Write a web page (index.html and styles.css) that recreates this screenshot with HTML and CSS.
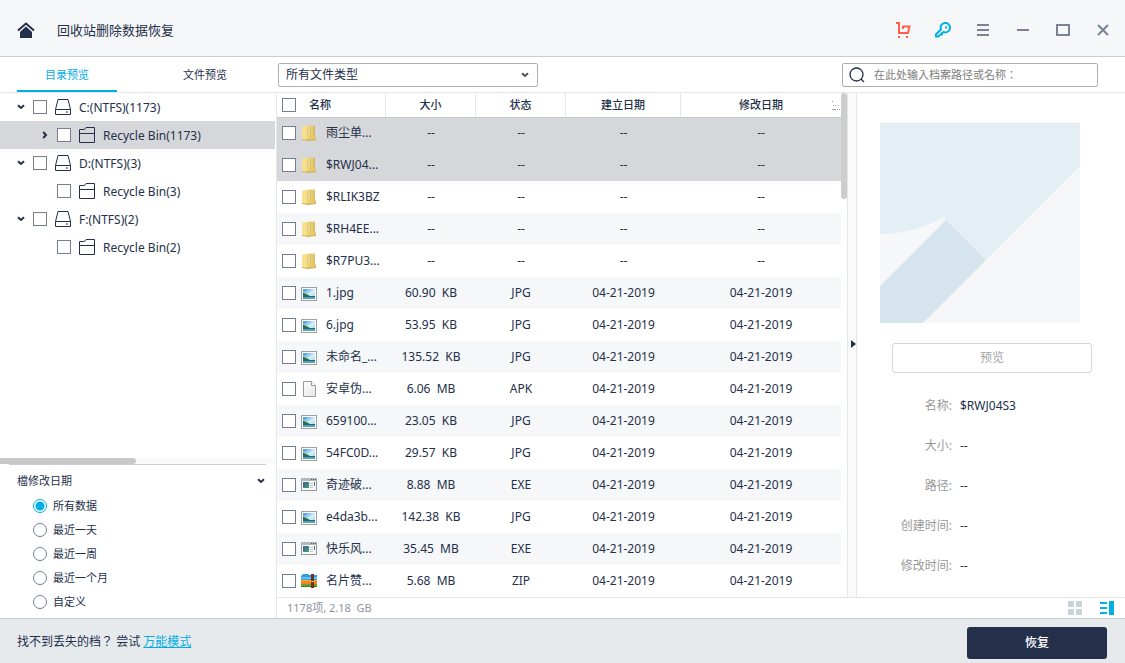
FILE: index.html
```html
<!DOCTYPE html>
<html lang="zh-CN">
<head>
<meta charset="utf-8">
<title>回收站删除数据恢复</title>
<link rel="stylesheet" href="styles.css">
</head>
<body>
<svg class="sprite" aria-hidden="true">
  <defs>
    <linearGradient id="gold" x1="0" x2="1"><stop offset="0" stop-color="#fbeea6"/><stop offset="1" stop-color="#e3bf5c"/></linearGradient>
    <linearGradient id="sky" x1="0" y1="0" x2="1" y2="1"><stop offset="0" stop-color="#3c93d6"/><stop offset="0.55" stop-color="#d8f0fa"/><stop offset="1" stop-color="#8cc7e6"/></linearGradient>
    <linearGradient id="paper" x1="0" y1="0" x2="1" y2="1"><stop offset="0" stop-color="#ffffff"/><stop offset="1" stop-color="#e4e4e4"/></linearGradient>
    <linearGradient id="pane" x1="0" y1="0" x2="1" y2="1"><stop offset="0" stop-color="#3c5fa6"/><stop offset="1" stop-color="#3fa66b"/></linearGradient>
  </defs>
  <symbol id="chevron" viewBox="0 0 8 6"><path d="M1 1.2 L4 4 L7 1.2" fill="none" stroke="currentColor" stroke-width="2"/></symbol>
  <symbol id="drive" viewBox="0 0 16 16"><path d="M0.5 10.5 L3 0.5 H13 L15.5 10.5 V15.5 H0.5 Z M0.5 10.5 H15.5 M11 13 H13" fill="none" stroke="currentColor"/></symbol>
  <symbol id="bin" viewBox="0 0 16 16"><path d="M0.5 15.5 V2.5 H5.5 L7 0.5 H15.5 V15.5 Z M0.5 6.5 H15.5" fill="none" stroke="currentColor"/></symbol>
  <symbol id="folder" viewBox="0 0 16 16"><path d="M1 1.5 L8 0.5 H13.5 V10 L15 12 V14.5 L8 15.5 L1 14.5 Z" fill="url(#gold)"/><path d="M1.3 1.5 V14.5 L7 15.5 V2 Z" fill="#f5e08c"/><path d="M7 2 V15.5 M9 1 V15 M13.2 1 V10.5 M1 14.5 L7 15.5 L15 14.5" fill="none" stroke="#c9a445" stroke-width="0.8"/><path d="M8 1.5 V14" stroke="#fff6c8" stroke-width="0.8"/></symbol>
  <symbol id="image" viewBox="0 0 16 16"><rect x="0.5" y="2.5" width="15" height="13" fill="#fff" stroke="#a0a0a0"/><rect x="2" y="4" width="12" height="10" fill="url(#sky)"/><path d="M2 8 Q6 9 9 11 L14 11 V12 H2 Z" fill="#2c6b4a"/><path d="M2 12 H14 V14 H2 Z" fill="#4fa3c4"/></symbol>
  <symbol id="file" viewBox="0 0 16 16"><path d="M2.5 0.5 H10.5 L14.5 4.5 V15.5 H2.5 Z" fill="url(#paper)" stroke="#9a9a9a"/><path d="M10.5 0.5 V4.5 H14.5" fill="#fff" stroke="#9a9a9a"/></symbol>
  <symbol id="app" viewBox="0 0 16 16"><rect x="0.5" y="1.5" width="15" height="12" fill="#fafafa" stroke="#969696"/><path d="M0 1 H16 V4 H0 Z" fill="#b4b6b8"/><path d="M10 2.5 H11 M12 2.5 H13 M14 2.5 H15" stroke="#555"/><rect x="2" y="5" width="6" height="6" fill="url(#pane)"/><path d="M9 6.5 H12 M9 8.5 H12 M9 10.5 H12" stroke="#c4c4c4"/><path d="M13.5 5 V9" stroke="#327b86"/></symbol>
  <symbol id="archive" viewBox="0 0 16 16"><path d="M0 8 V3 L2 1 H7 L8 2 H16 V8 Z" fill="#359be0"/><path d="M1 4 H16 V6 H0 Z" fill="#63c1f5"/><path d="M0 7 H16 V11 H0 Z" fill="#f3841f"/><path d="M0 7 H16 V8 H0 Z" fill="#fbb040"/><path d="M0 11 H16 V14 H0 Z" fill="#6aa22f"/><path d="M0 13 H16 V14 H0 Z" fill="#3f7a1d"/><path d="M10 1 H13 V15 H10 Z" fill="#6b3217"/><path d="M10 8.5 H13" stroke="#e7c27a"/></symbol>
</svg>

<header class="titlebar">
  <svg class="home" viewBox="0 0 18 16" aria-hidden="true"><path d="M1 8.5 L9 1.5 L17 8.5" fill="none" stroke="currentColor" stroke-width="2"/><path d="M9 4.5 L15 10 V16 H3 V10 Z" fill="currentColor"/></svg>
  <h1 class="title">回收站删除数据恢复</h1>
  <nav class="window-tools">
    <button class="tool cart" type="button" aria-label="购买"><svg viewBox="0 0 16 16"><path d="M1 1 H4 V11 H13 L14.5 4.5 H8 V7" fill="none" stroke="currentColor" stroke-width="2"/><path d="M3 14 H5 V16 H3 Z M11 14 H13 V16 H11 Z" fill="currentColor"/></svg></button>
    <button class="tool key" type="button" aria-label="激活"><svg viewBox="0 0 16 16"><path d="M6 7.5 A4.700 4.700 0 1 1 8.500 10 L7 11 V12.5 H5 L3.5 14.5 H1 V12.300 Z" fill="none" stroke="currentColor" stroke-width="2" stroke-linejoin="round"/><path d="M10 4.500 H12 V6.500 H10 Z" fill="currentColor"/></svg></button>
    <button class="tool" type="button" aria-label="菜单"><svg viewBox="0 0 16 16"><path d="M2 3 H14 M2 8 H14 M2 13 H14" stroke="currentColor" stroke-width="2"/></svg></button>
    <button class="tool" type="button" aria-label="最小化"><svg viewBox="0 0 16 16"><path d="M2 8 H14" stroke="currentColor" stroke-width="2"/></svg></button>
    <button class="tool" type="button" aria-label="最大化"><svg viewBox="0 0 16 16"><rect x="2" y="3" width="12" height="10" fill="none" stroke="currentColor" stroke-width="2"/></svg></button>
    <button class="tool" type="button" aria-label="关闭"><svg viewBox="0 0 16 16"><path d="M3 3 L13 13 M13 3 L3 13" stroke="currentColor" stroke-width="2"/></svg></button>
  </nav>
</header>

<div class="workspace">
  <aside class="sidebar">
    <div class="tabs" role="tablist">
      <button class="tab active" type="button" role="tab" aria-selected="true">目录预览</button>
      <button class="tab" type="button" role="tab" aria-selected="false">文件预览</button>
    </div>
    <div class="side-body">
      <div class="tree">
        <label class="node"><svg class="arrow"><use href="#chevron"/></svg><input class="check" type="checkbox"><svg class="icon"><use href="#drive"/></svg><span>C:(NTFS)(1173)</span></label>
        <label class="node child selected"><svg class="arrow closed"><use href="#chevron"/></svg><input class="check" type="checkbox"><svg class="icon"><use href="#bin"/></svg><span>Recycle Bin(1173)</span></label>
        <label class="node"><svg class="arrow"><use href="#chevron"/></svg><input class="check" type="checkbox"><svg class="icon"><use href="#drive"/></svg><span>D:(NTFS)(3)</span></label>
        <label class="node child"><svg class="arrow"></svg><input class="check" type="checkbox"><svg class="icon"><use href="#bin"/></svg><span>Recycle Bin(3)</span></label>
        <label class="node"><svg class="arrow"><use href="#chevron"/></svg><input class="check" type="checkbox"><svg class="icon"><use href="#drive"/></svg><span>F:(NTFS)(2)</span></label>
        <label class="node child"><svg class="arrow"></svg><input class="check" type="checkbox"><svg class="icon"><use href="#bin"/></svg><span>Recycle Bin(2)</span></label>
      </div>
      <div class="tree-scroll"><div class="tree-thumb"></div></div>
      <section class="filter">
        <h2 class="filter-title">檔修改日期<svg class="arrow"><use href="#chevron"/></svg></h2>
        <label class="option"><input class="radio" type="radio" name="date" checked>所有数据</label>
        <label class="option"><input class="radio" type="radio" name="date">最近一天</label>
        <label class="option"><input class="radio" type="radio" name="date">最近一周</label>
        <label class="option"><input class="radio" type="radio" name="date">最近一个月</label>
        <label class="option"><input class="radio" type="radio" name="date">自定义</label>
      </section>
    </div>
  </aside>

  <main class="content">
    <div class="toolbar">
      <div class="type-box">
        <select class="type-select" aria-label="文件类型"><option>所有文件类型</option></select>
        <svg class="type-arrow" aria-hidden="true"><use href="#chevron"/></svg>
      </div>
      <label class="search">
        <svg class="search-icon" viewBox="0 0 16 16" aria-hidden="true"><circle cx="7.5" cy="7.5" r="6.5" fill="none" stroke="currentColor" stroke-width="1.3"/><path d="M12 12 L15 15" stroke="currentColor" stroke-width="1.3"/></svg>
        <input class="search-input" type="text" lang="zh-TW" placeholder="在此处输入档案路径或名称：" aria-label="在此处输入档案路径或名称">
      </label>
    </div>

    <div class="panes">
      <div class="list">
        <table class="files">
          <colgroup><col class="c-name"><col class="c-size"><col class="c-kind"><col class="c-made"><col class="c-edit"></colgroup>
          <thead>
            <tr><th><span class="name head"><input class="check" type="checkbox" aria-label="全选"><span>名称</span></span></th><th>大小</th><th>状态</th><th>建立日期</th><th>修改日期<svg class="sort" viewBox="0 0 10 10" aria-hidden="true"><path d="M1 1.5 H2 M2 5.5 H3 M4 5.5 H5 M7 5.500 H8 M1 9.500 H5 M6 9.500 H7 M8 9.500 H9" stroke="currentColor"/></svg></th></tr>
          </thead>
          <tbody>
            <tr class="selected"><td><label class="name"><input class="check" type="checkbox"><svg class="icon"><use href="#folder"/></svg><span>雨尘单...</span></label></td><td>--</td><td>--</td><td>--</td><td>--</td></tr>
            <tr class="selected"><td><label class="name"><input class="check" type="checkbox"><svg class="icon"><use href="#folder"/></svg><span>$RWJ04...</span></label></td><td>--</td><td>--</td><td>--</td><td>--</td></tr>
            <tr><td><label class="name"><input class="check" type="checkbox"><svg class="icon"><use href="#folder"/></svg><span>$RLIK3BZ</span></label></td><td>--</td><td>--</td><td>--</td><td>--</td></tr>
            <tr><td><label class="name"><input class="check" type="checkbox"><svg class="icon"><use href="#folder"/></svg><span>$RH4EE...</span></label></td><td>--</td><td>--</td><td>--</td><td>--</td></tr>
            <tr><td><label class="name"><input class="check" type="checkbox"><svg class="icon"><use href="#folder"/></svg><span>$R7PU3...</span></label></td><td>--</td><td>--</td><td>--</td><td>--</td></tr>
            <tr><td><label class="name"><input class="check" type="checkbox"><svg class="icon"><use href="#image"/></svg><span>1.jpg</span></label></td><td>60.90  KB</td><td>JPG</td><td>04-21-2019</td><td>04-21-2019</td></tr>
            <tr><td><label class="name"><input class="check" type="checkbox"><svg class="icon"><use href="#image"/></svg><span>6.jpg</span></label></td><td>53.95  KB</td><td>JPG</td><td>04-21-2019</td><td>04-21-2019</td></tr>
            <tr><td><label class="name"><input class="check" type="checkbox"><svg class="icon"><use href="#image"/></svg><span>未命名_...</span></label></td><td>135.52  KB</td><td>JPG</td><td>04-21-2019</td><td>04-21-2019</td></tr>
            <tr><td><label class="name"><input class="check" type="checkbox"><svg class="icon"><use href="#file"/></svg><span>安卓伪...</span></label></td><td>6.06  MB</td><td>APK</td><td>04-21-2019</td><td>04-21-2019</td></tr>
            <tr><td><label class="name"><input class="check" type="checkbox"><svg class="icon"><use href="#image"/></svg><span>659100...</span></label></td><td>23.05  KB</td><td>JPG</td><td>04-21-2019</td><td>04-21-2019</td></tr>
            <tr><td><label class="name"><input class="check" type="checkbox"><svg class="icon"><use href="#image"/></svg><span>54FC0D...</span></label></td><td>29.57  KB</td><td>JPG</td><td>04-21-2019</td><td>04-21-2019</td></tr>
            <tr><td><label class="name"><input class="check" type="checkbox"><svg class="icon"><use href="#app"/></svg><span>奇迹破...</span></label></td><td>8.88  MB</td><td>EXE</td><td>04-21-2019</td><td>04-21-2019</td></tr>
            <tr><td><label class="name"><input class="check" type="checkbox"><svg class="icon"><use href="#image"/></svg><span>e4da3b...</span></label></td><td>142.38  KB</td><td>JPG</td><td>04-21-2019</td><td>04-21-2019</td></tr>
            <tr><td><label class="name"><input class="check" type="checkbox"><svg class="icon"><use href="#app"/></svg><span>快乐风...</span></label></td><td>35.45  MB</td><td>EXE</td><td>04-21-2019</td><td>04-21-2019</td></tr>
            <tr><td><label class="name"><input class="check" type="checkbox"><svg class="icon"><use href="#archive"/></svg><span>名片赞...</span></label></td><td>5.68  MB</td><td>ZIP</td><td>04-21-2019</td><td>04-21-2019</td></tr>
          </tbody>
        </table>
        <div class="list-scroll"><div class="list-thumb"></div></div>
      </div>

      <button class="splitter" type="button" aria-label="收起预览"><svg viewBox="0 0 6 8"><path d="M1 0 L6 4 L1 8 Z" fill="currentColor"/></svg></button>

      <section class="preview">
        <svg class="picture" viewBox="0 0 200 200" role="img" aria-label="预览图">
          <rect width="200" height="200" fill="#f5f7f9"/>
          <path d="M0 0 H200 V43 L106 137 L66 97 L63 94 Q35 111 0 111 Z" fill="#e3eff5"/>
          <path d="M66 97 L106 137 L43 200 H0 V163 Z" fill="#d6e5ed"/>
        </svg>
        <button class="preview-button" type="button">预览</button>
        <dl class="details">
          <dt>名称:</dt><dd>$RWJ04S3</dd>
          <dt>大小:</dt><dd>--</dd>
          <dt>路径:</dt><dd>--</dd>
          <dt>创建时间:</dt><dd>--</dd>
          <dt>修改时间:</dt><dd>--</dd>
        </dl>
      </section>
    </div>

    <div class="status">
      <span class="summary">1178项, 2.18  GB</span>
      <button class="view grid-view" type="button" aria-label="图标视图"><svg viewBox="0 0 14 14"><path d="M0 0 H6 V6 H0 Z M8 0 H14 V6 H8 Z M0 8 H6 V14 H0 Z M8 8 H14 V14 H8 Z" fill="currentColor"/></svg></button>
      <button class="view list-view" type="button" aria-label="详细视图"><svg viewBox="0 0 14 14"><path d="M0 1 H7 V3 H0 Z M0 6 H7 V8 H0 Z M0 11 H7 V13 H0 Z M9 0 H14 V14 H9 Z" fill="currentColor"/></svg></button>
    </div>
  </main>
</div>

<footer class="footer">
  <p class="hint">找不到丢失的档<span class="mark" lang="zh-TW">？</span> 尝试 <a class="link" href="#">万能模式</a></p>
  <button class="recover" type="button">恢复</button>
</footer>
</body>
</html>
```

FILE: styles.css
```css
* { box-sizing: border-box; }

body {
  margin: 0;
  min-height: 100vh;
  display: flex;
  flex-direction: column;
  background: #fff;
  color: #242f4a;
  font: 12px/16px "Noto Sans", "Noto Sans CJK SC", sans-serif;
}

button, input, select { font: inherit; color: inherit; margin: 0; }
button { padding: 0; border: 0; background: none; cursor: pointer; }
svg { display: block; flex: none; }

.sprite { position: absolute; width: 0; height: 0; }
.icon { width: 16px; height: 16px; }
.arrow { width: 8px; height: 6px; }
.arrow.closed { transform: rotate(-90deg); }

.check, .radio {
  appearance: none;
  flex: none;
  width: 14px;
  height: 14px;
  border: 1px solid #757d90;
  background: #fff;
}
.radio { border-radius: 50%; }
.radio:checked {
  border-color: #00aee6;
  background: radial-gradient(circle, #00aee6 4px, #fff 5px);
}

/* Title bar */
.titlebar {
  display: flex;
  align-items: center;
  height: 57px;
  padding: 4px 2px 0 17px;
  background: #f5f7f9;
  border-bottom: 1px solid #caccd5;
}
.home { width: 18px; height: 16px; }
.title {
  flex: 1;
  margin: 0 0 0 22px;
  font-size: 13px;
  line-height: 20px;
  font-weight: 400;
}
.window-tools { display: flex; color: #7a8296; }
.tool { display: grid; place-items: center; width: 40px; height: 40px; }
.tool svg { width: 16px; height: 16px; }
.cart { color: #ff5f4a; }
.key { color: #00aee6; }

.workspace { flex: 1; display: flex; }

/* Sidebar */
.sidebar {
  flex: none;
  display: flex;
  flex-direction: column;
  width: 277px;
}
.tabs {
  display: flex;
  gap: 38px;
  height: 36px;
  padding-left: 17px;
  border-bottom: 1px solid #e3e7ea;
  font-size: 11px;
}
.tab { width: 100px; padding-top: 2px; border-bottom: 2px solid transparent; }
.tab.active { color: #00aee6; border-color: #00aee6; }

.side-body {
  flex: 1;
  display: flex;
  flex-direction: column;
  border-right: 1px solid #e3e7ea;
}
.tree { flex: 1; padding-right: 1px; }
.node {
  display: flex;
  align-items: center;
  gap: 8px;
  height: 28px;
  padding-left: 17px;
}
.node.child { padding-left: 41px; }
.node.selected { background: #d6d7da; }
.node span { padding-top: 2px; }

.tree-scroll { height: 6px; background: #fafafa; }
.tree-thumb { width: 136px; height: 6px; border-radius: 0 3px 3px 0; background: #c8c8c8; }

.filter {
  margin: 0 10px 0 9px;
  padding: 5px 0 4px 8px;
  border-top: 1px solid #caccd5;
  font-size: 11px;
}
.filter-title {
  display: flex;
  align-items: center;
  justify-content: space-between;
  height: 24px;
  margin: 0;
  padding: 0 1px 2px 0;
  font-size: 11px;
  font-weight: 400;
}
.option {
  display: flex;
  align-items: center;
  gap: 6px;
  height: 24px;
  padding-left: 16px;
}

/* Toolbar */
.content { flex: 1; min-width: 0; display: flex; flex-direction: column; }
.toolbar {
  display: flex;
  align-items: center;
  justify-content: space-between;
  height: 36px;
  padding: 1px 27px 0 1px;
  border-bottom: 1px solid #e3e7ea;
}
.type-box { position: relative; width: 260px; }
.type-select {
  appearance: none;
  display: block;
  width: 100%;
  height: 24px;
  padding: 0 24px 0 7px;
  border: 1px solid #adadad;
  border-radius: 2px;
  background: #fff;
}
.type-arrow {
  position: absolute;
  top: 9px;
  right: 9px;
  width: 8px;
  height: 6px;
  color: #555;
  pointer-events: none;
}
.search {
  display: flex;
  align-items: center;
  gap: 9px;
  width: 256px;
  height: 24px;
  padding: 0 6px;
  border: 1px solid #adadad;
  border-radius: 2px;
}
.search-icon { width: 16px; height: 16px; }
.search-input {
  flex: 1;
  min-width: 0;
  padding: 0;
  border: 0;
  outline: 0;
  background: none;
  font-family: "Noto Sans", "Noto Sans CJK TC", sans-serif;
  font-size: 11px;
}
.search-input::placeholder { color: #7d7d7d; }

/* File list */
.panes { flex: 1; display: flex; }
.list { flex: 1; min-width: 0; display: flex; align-items: flex-start; }
.files {
  flex: 1;
  min-width: 0;
  width: 100%;
  table-layout: fixed;
  border-collapse: separate;
  border-spacing: 0;
}
.c-name { width: 109px; }
.c-size, .c-kind { width: 90px; }
.c-made { width: 115px; }
.files th {
  position: relative;
  height: 24px;
  padding: 0;
  border-right: 1px solid #e3e7ea;
  box-shadow: 0 1px #c5c8d0;
  font-size: 11px;
  font-weight: 500;
}
.files th:last-child { border-right: 0; }
.sort { position: absolute; right: 0; top: 7px; width: 10px; height: 10px; color: #9a9fac; }
.files td { height: 32px; padding: 0; text-align: center; white-space: pre; }
.files tbody tr:nth-child(even) { background: #f5f7f9; }
.files tbody tr.selected { background: #d6d7da; }
.name { display: flex; align-items: center; padding-left: 5px; }
.name .icon { margin: 0 9px 0 5px; }
.name.head { gap: 13px; }

.list-scroll { width: 6px; }
.list-thumb { height: 106px; border-radius: 3px; background: #cdcdcd; }

.splitter {
  display: grid;
  place-items: center end;
  width: 10px;
  padding-bottom: 2px;
  border: 1px solid #e6e6e6;
  border-width: 0 1px;
  background: #fafafa;
}
.splitter svg { width: 6px; height: 8px; }

/* Preview */
.preview { flex: none; width: 268px; padding: 30px 0 0; }
.picture { width: 200px; height: 200px; margin-left: 23px; }
.preview-button {
  display: block;
  width: 200px;
  height: 30px;
  margin: 20px 0 0 35px;
  border: 1px solid #d5d5dc;
  border-radius: 3px;
  color: #a5a5a5;
}
.details {
  display: grid;
  grid-template-columns: 95px 1fr;
  column-gap: 8px;
  margin: 13px 0 0;
  line-height: 40px;
}
.details dt { text-align: right; color: #999; }
.details dd { margin: 0; }

/* Status */
.status {
  display: flex;
  align-items: center;
  gap: 18px;
  height: 21px;
  padding: 0 11px 0 10px;
  border-top: 1px solid #e3e7ea;
}
.summary { flex: 1; white-space: pre; color: #8f949f; font-size: 11px; }
.view svg { width: 14px; height: 14px; }
.grid-view { color: #c9d5d9; }
.list-view { color: #00aee6; }

/* Footer */
.footer {
  display: flex;
  align-items: center;
  justify-content: space-between;
  height: 45px;
  padding: 0 18px 0 17px;
  background: #e6eaed;
  border-top: 1px solid #c5cbd0;
}
.hint { margin: 0; }
.mark { font-family: "Noto Sans CJK TC", sans-serif; }
.link { color: #00aee6; }
.recover {
  width: 140px;
  height: 32px;
  margin-top: 4px;
  border-radius: 3px;
  background: #242f4a;
  color: #fff;
  font-weight: 500;
}
```
